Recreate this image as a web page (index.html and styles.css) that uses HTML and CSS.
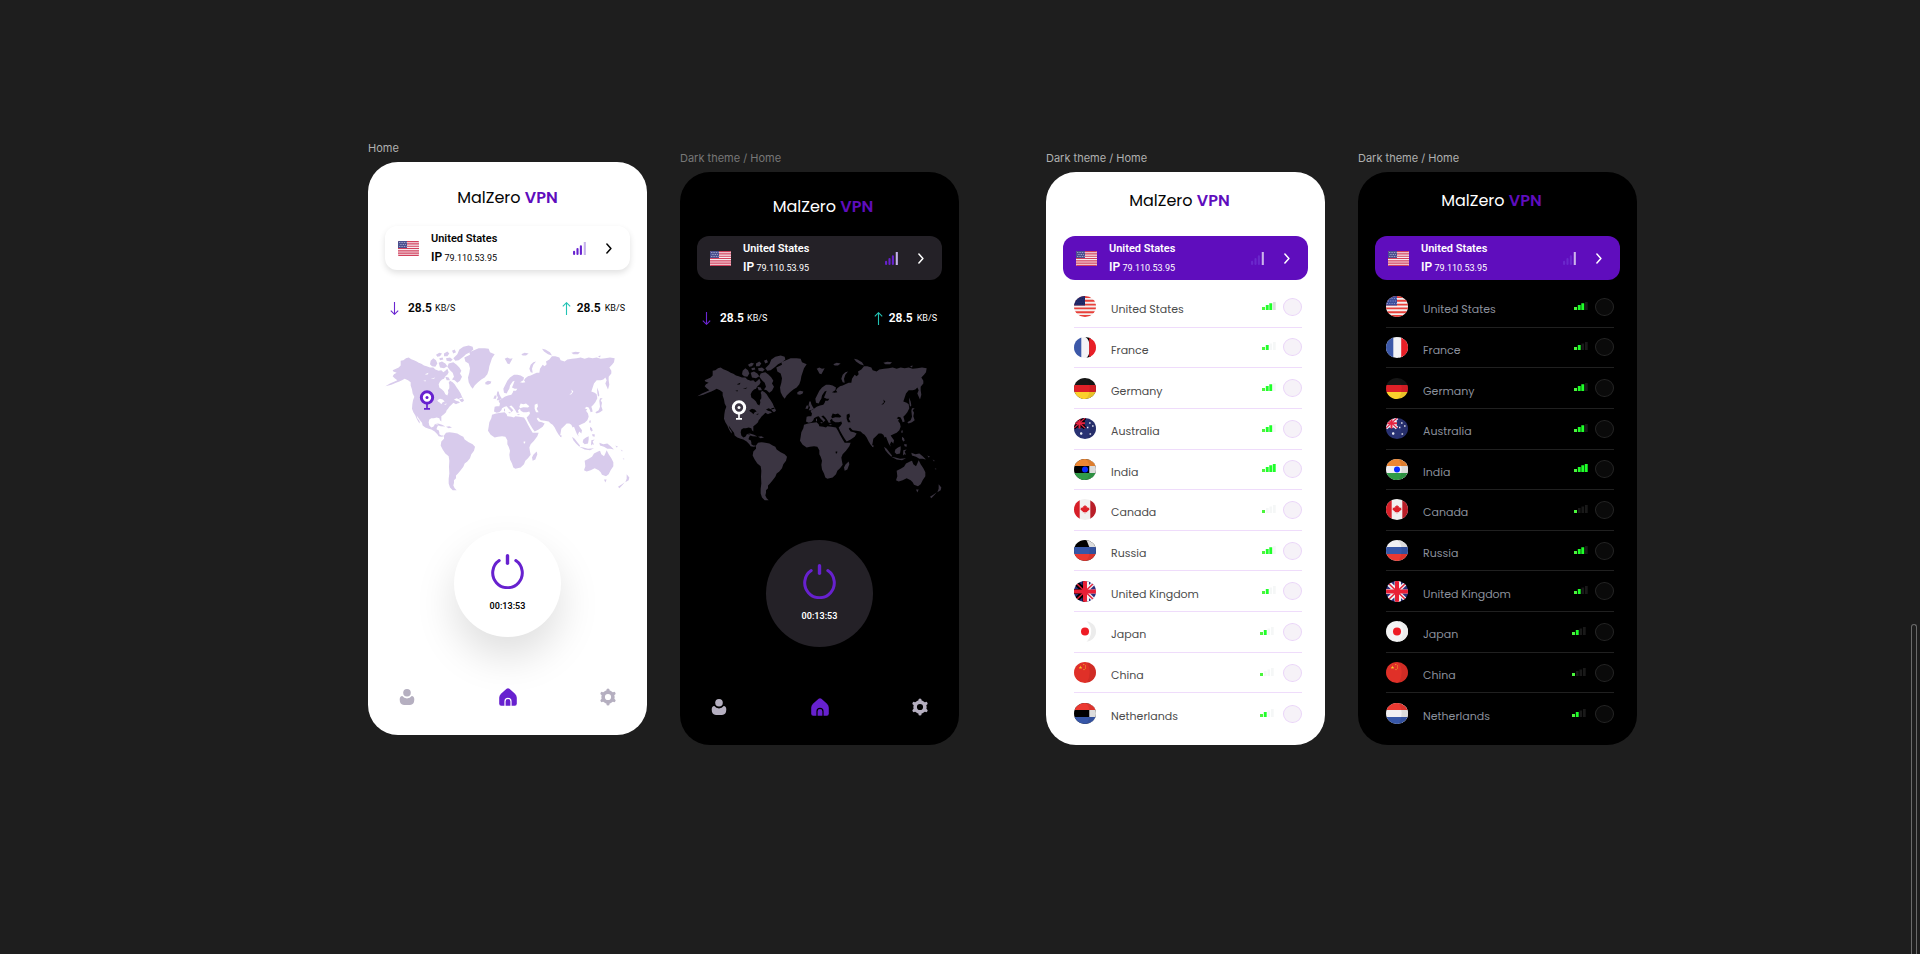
FILE: index.html
```html
<!DOCTYPE html>
<html lang="en">
<head>
<meta charset="utf-8">
<title>MalZero VPN</title>
<link rel="stylesheet" href="styles.css">
</head>
<body>
<svg class="defs" aria-hidden="true">
  <symbol id="us-rect" viewBox="0 0 21 15">
    <rect width="21" height="15" fill="#f6e9ee"/>
    <path d="M0 .6h21M0 2.9h21M0 5.2h21M0 7.5h21M0 9.8h21M0 12.1h21M0 14.4h21" stroke="#d2405c" stroke-width="1.15"/>
    <rect width="9" height="7" fill="#4a4f8f"/>
    <path d="M1 1.5h7.5M1.8 3.5h6.5M1 5.5h7.5" stroke="#c9cbe2" stroke-width=".8" stroke-dasharray=".8 .9"/>
  </symbol>
  <symbol id="bars" viewBox="0 0 13 13">
    <path d="M1.1 9.7v2.2M4.5 7v4.9M7.9 4.2v7.7" stroke="var(--bar)" stroke-width="2.1" stroke-linecap="round"/>
    <path d="M11.8 0v13" stroke="var(--bar-last)" stroke-width="2.1"/>
  </symbol>
  <symbol id="chevron" viewBox="0 0 6 11"><path d="M.9 1l4 4.5-4 4.5" fill="none" stroke="currentColor" stroke-width="1.5" stroke-linecap="round" stroke-linejoin="round"/></symbol>
  <symbol id="down" viewBox="0 0 9 13"><path d="M4.500 0v12M.8 8.600l3.700 3.700 3.700-3.700" fill="none" stroke="#6a25d0" stroke-width="1.1"/></symbol>
  <symbol id="up" viewBox="0 0 9 13"><path d="M4.500 13V1M.8 4.400L4.500.7l3.700 3.700" fill="none" stroke="#22c3b4" stroke-width="1.1"/></symbol>
  <symbol id="power" viewBox="0 0 33 35">
    <path d="M8.200 6.600a14.800 14.800 0 1 0 16.600 0" fill="none" stroke="#6721cf" stroke-width="3" stroke-linecap="round"/>
    <path d="M16.500 1.800v7.400" stroke="#6721cf" stroke-width="3.400" stroke-linecap="round"/>
  </symbol>
  <symbol id="user" viewBox="0 0 18 18">
    <circle cx="9" cy="4.700" r="3.800" fill="#b5afc0"/>
    <path d="M1.700 11.500Q1.700 8 4.300 8Q6 10.400 9 10.400Q12 10.400 13.700 8Q16.300 8 16.300 11.500Q16.300 16.900 12 16.900H6Q1.700 16.900 1.700 11.500Z" fill="#b5afc0"/>
  </symbol>
  <symbol id="house" viewBox="0 0 18 18">
    <path d="M7.600.8Q9-.3 10.400.8L16 5.700Q17.800 7.600 17.800 9.800V15.600Q17.800 17.800 15.800 17.800H2.200Q.2 17.800.2 15.600V9.800Q.2 7.600 2 5.700Z" fill="#6721cf"/>
    <path d="M6 18V13.400a3 3 0 0 1 6 0V18" fill="none" stroke="var(--surface)" stroke-width="1.200"/>
  </symbol>
  <symbol id="gear" viewBox="0 0 18 18">
    <g fill="none" stroke="#b5afc0">
      <circle cx="9" cy="9" r="4.900" stroke-width="3.600"/>
      <path d="M9 3.500V2M9 14.500V16M13.700 6.300l1.300-.8M4.300 11.700l-1.300.8M13.700 11.700l1.300.8M4.300 6.300L3 5.500" stroke-width="3.200" stroke-linecap="round"/>
    </g>
  </symbol>

  <symbol id="world" viewBox="45 42 735 440">
    <path fill="var(--land)" fill-rule="evenodd" d="M92 92L100 90 108 84 116 82 124 87 132 90 140 94 146 98 154 101 162 106 170 108 180 112 190 112 196 118 206 122 214 120 220 126 226 122 232 116 236 126 232 134 226 138 222 146 216 148 210 154 206 162 208 172 216 178 222 184 226 192 232 196 235 188 234 180 238 174 238 164 236 158 240 152 248 156 254 162 260 172 266 180 272 190 276 200 278 206 268 208 260 204 252 208 258 212 266 214 270 218 262 220 258 222 250 218 246 222 242 226 238 230 234 236 230 240 228 246 222 252 214 258 214 266 214 274 210 270 208 264 200 262 192 264 184 264 178 268 176 276 178 286 184 292 190 290 194 284 202 282 204 286 200 294 200 298 206 300 208 306 208 312 214 316 220 316 222 318 214 320 206 318 202 312 194 304 184 298 176 296 166 292 158 286 156 278 150 270 144 262 140 256 142 264 148 272 150 280 146 276 140 266 136 256 130 246 126 236 127 222 129 210 133 200 128 190 126 178 122 166 122 156 114 150 104 146 96 150 88 154 78 158 64 164 46 168 60 160 74 154 82 150 74 144 68 138 72 132 80 128 70 124 68 120 78 116 86 112 92 106Z
    M202 210L210 206 218 208 224 214 218 216 214 222 210 218 204 214ZM222 222L230 220 228 224ZM160 152L168 150 166 154ZM164 132L176 128 172 134ZM182 146L196 142 192 146Z
    M283 82L300 74 298 66 312 60 326 54 344 54 356 56 360 66 374 72 366 84 362 96 358 108 356 120 352 132 344 142 334 148 324 156 314 166 308 176 302 168 296 156 294 142 298 128 300 114 296 100 286 94Z
    M250 84L262 72 268 58 280 50 296 46 308 50 310 58 300 66 288 72 280 80 266 90 256 92ZM182 92L190 84 198 90 202 100 196 110 186 108 180 102ZM206 98L216 94 226 100 232 108 222 114 210 112ZM198 74L208 68 216 70 210 78 202 80ZM222 70L232 64 238 70 232 78 222 78ZM228 84L240 82 248 88 242 94 230 92ZM208 84L218 82 220 88 210 90ZM246 62L254 58 258 66 250 70ZM236 100L250 96 260 104 268 112 274 122 270 130 276 140 270 152 262 158 254 150 246 148 252 140 248 128 240 120 232 110ZM226 140L236 142 240 150 230 150ZM268 204L278 202 282 212 276 216 270 212Z
    M346 156L354 152 364 154 362 160 354 164 346 162ZM192 282L204 280 216 284 226 289 212 288 200 284ZM228 290L238 288 246 292 236 294Z
    M222 316L228 308 238 306 250 308 262 310 272 316 280 320 284 328 296 336 308 342 315 350 312 362 304 372 300 384 292 394 284 400 280 410 272 420 264 430 258 436 258 444 252 450 252 458 250 466 254 474 260 480 248 480 240 472 236 460 236 446 238 430 237 410 238 392 236 378 226 370 218 358 212 346 214 334 222 326Z
    M366 254L378 250 392 248 404 246 410 252 412 258 424 260 432 262 436 258 448 260 462 262 468 272 474 284 482 298 488 308 496 308 506 308 502 318 492 332 482 342 478 352 480 364 482 374 474 384 466 392 462 402 452 412 436 416 430 412 426 400 420 388 418 374 420 362 416 350 412 342 412 330 406 320 396 318 384 320 374 322 362 314 354 302 356 290 358 276 364 264ZM461 334L466 334 465 340 461 339ZM500 364L502 372 496 388 488 392 486 382 490 374 496 368Z
    M374 230L372 244 380 248 388 246 394 240 396 234 404 230 410 228 416 236 422 242 424 246 430 240 424 234 418 228 424 226 430 232 436 240 440 248 446 248 444 240 450 236 452 242 460 246 470 246 478 244 480 250 476 256 470 262 474 272 482 286 488 296 494 304 506 298 518 290 524 280 516 276 506 274 500 266 504 262 512 270 524 272 536 274 542 280 548 284 554 292 560 304 566 314 570 318 572 308 574 296 582 288 590 280 598 280 604 284 608 292 612 290 616 300 620 310 626 320 624 312 628 304 634 310 636 300 630 292 626 286 634 282 644 278 652 270 656 260 654 250 648 242 652 238 644 234 650 230 656 232 660 240 662 246 668 244 666 236 664 230 670 224 676 216 682 204 680 192 674 188 664 184 668 172 672 160 680 150 692 150 700 148 706 142 710 150 706 160 714 178 718 164 716 150 716 140 724 130 724 122 718 112 726 104 732 96 734 84 720 82 706 84 692 86 680 82 668 84 656 82 644 86 632 82 620 84 606 86 592 88 584 94 572 90 568 82 556 78 546 78 538 88 528 94 530 102 524 108 518 104 510 116 508 128 500 128 490 132 482 136 474 138 466 144 462 150 466 156 458 158 450 156 460 150 462 142 452 136 442 134 432 134 420 142 412 152 406 164 400 176 402 188 410 190 414 182 418 176 420 166 428 154 434 152 430 162 426 172 434 176 442 176 438 182 430 182 428 188 424 194 414 196 404 200 398 204 390 208 386 214 390 220 388 228 380 228Z
    M448 230L452 220 460 222 468 220 478 228 474 232 460 231 450 234ZM494 224L502 220 504 228 500 236 506 246 498 246 494 236ZM604 178L610 184 604 192 598 194 606 186Z
    M382 184L386 184 388 192 392 200 396 206 388 210 380 210 384 202 380 194ZM374 196L380 196 378 206 370 206ZM498 94L490 96 482 104 478 116 482 126 488 128 486 116 490 104ZM404 86L412 82 420 86 428 84 424 92 418 102 412 100 408 92ZM454 72L464 68 476 70 468 76 458 76ZM516 56L526 58 540 66 546 76 534 72 522 64ZM604 68L616 65 630 66 624 72 610 72ZM684 78L692 76 690 82ZM414 246L422 246 420 250ZM402 236L405 236 405 243 402 243ZM440 252L450 252 446 255Z
    M698 204L692 210 696 218 694 228 698 240 690 246 680 250 676 246 686 240 690 230 688 212 690 204ZM681 172L686 184 688 196 684 200 682 188ZM658 272L662 270 662 278 658 278ZM660 290L666 294 668 302 664 304 660 298ZM666 312L674 312 674 320 668 318ZM570 314L575 316 574 321 570 320Z
    M606 320L614 326 622 336 630 346 628 350 618 340 610 330ZM628 350L640 352 654 356 672 354 660 360 644 358ZM640 328L648 322 656 318 656 328 654 340 644 342 638 336ZM664 330L674 328 668 334 672 344 667 342 663 346ZM688 338L700 342 712 340 722 348 732 358 722 356 712 356 702 350 690 346ZM736 346L744 350 740 352ZM752 358L758 362 756 364ZM758 384L763 386 762 389Z
    M644 392L656 386 666 380 672 370 684 364 690 362 694 372 702 378 706 370 710 360 716 372 724 384 730 396 730 408 722 420 716 432 708 438 696 434 692 426 686 420 674 414 662 420 650 424 642 420 646 408ZM702 448L710 448 706 457ZM770 432L778 442 776 450 766 456 770 446ZM764 456L758 464 748 474 744 470 756 462Z"/>
    <circle cx="171" cy="202" r="17" fill="var(--pin-core)" stroke="var(--pin)" stroke-width="9"/>
    <circle cx="171" cy="202" r="4.500" fill="var(--pin)"/>
    <path d="M171 220v16M162 236h18" fill="none" stroke="var(--pin)" stroke-width="5"/>
  </symbol>

  <symbol id="sig1" viewBox="0 0 14 8"><path d="M4 3h2.600v5H4zM7.500 1.500h2.600V8H7.500zM11 0h2.700v8H11z" fill="var(--off)"/><path d="M0 5h3v3H0z" fill="#4af53c"/></symbol>
  <symbol id="sig2" viewBox="0 0 14 8"><path d="M7.500 1.500h2.600V8H7.500zM11 0h2.700v8H11z" fill="var(--off)"/><path d="M0 5h3v3H0z" fill="#4af53c"/><path d="M3.800 3h2.900v5H3.800z" fill="#1fff2a"/></symbol>
  <symbol id="sig3" viewBox="0 0 14 8"><path d="M11 0h2.700v8H11z" fill="var(--off)"/><path d="M0 5h3v3H0z" fill="#4af53c"/><path d="M3.800 3h2.900v5H3.800zM7.300 1.200h2.900V8H7.300z" fill="#1fff2a"/></symbol>
  <symbol id="sig4" viewBox="0 0 14 8"><path d="M0 5h3v3H0z" fill="#4af53c"/><path d="M3.800 3h2.900v5H3.800zM7.300 1.200h2.900V8H7.300zM10.800 0h2.900v8h-2.900z" fill="#1fff2a"/></symbol>

  <symbol id="shade" viewBox="0 0 22 21"><path d="M12.500 0Q19 10 12.500 21H22V0Z" fill="#000" opacity=".07"/></symbol>
  <symbol id="f-us" viewBox="0 0 22 21">
    <rect width="22" height="21" fill="#f5efee"/>
    <path d="M0 1h22M0 4.800h22M0 8.600h22M0 12.400h22M0 16.200h22M0 20h22" stroke="#e8403a" stroke-width="1.900"/>
    <path d="M0 0h11v9.500H0z" fill="var(--canton)"/>
    <path d="M1 2.500h10M2 5h9M1 7.500h10" stroke="var(--stars)" stroke-width="1" stroke-dasharray="1 1.300"/>
  </symbol>
  <symbol id="f-fr" viewBox="0 0 22 21"><rect width="22" height="21" fill="#f3f3f6"/><path d="M0 0h7.300v21H0z" fill="#3c58a8"/><path d="M11.500 0Q16 3 15.500 10.500Q16 18 12.500 21H17V0Z" fill="var(--white)"/><path d="M15.200 0H22v21h-6.800Z" fill="#e81f27"/></symbol>
  <symbol id="f-de" viewBox="0 0 22 21"><rect width="22" height="21" fill="#161616"/><path d="M0 7h22v7H0z" fill="#df2027"/><path d="M0 14h22v7H0z" fill="#fbd02c"/><use href="#shade"/></symbol>
  <symbol id="f-au" viewBox="0 0 22 21">
    <rect width="22" height="21" fill="#293273"/>
    <path d="M0 0L11 10M11 0L0 10M5.500 0v10M0 5h11" stroke="var(--white)" stroke-width="3.600"/>
    <path d="M0 0L11 10M11 0L0 10" stroke="#e0264a" stroke-width="1.200"/><path d="M5.500 0v10.500M0 5.200h11" stroke="#e62240" stroke-width="2"/>
    <path d="M6 15.500h2.400M7.200 14.300v2.400M15 5h1.600M13 9.500h1.400M18 8h1.600M15.500 16h1.600" stroke="#e8eaf4" stroke-width="1.500"/><use href="#shade"/>
  </symbol>
  <symbol id="f-in" viewBox="0 0 22 21"><rect width="22" height="21" fill="var(--white)"/><path d="M15.300 0H22v21h-6.700z" fill="#ededed"/><path d="M0 0h22v7H0z" fill="#ee8732"/><path d="M0 14h22v7H0z" fill="#319b48"/><circle cx="11" cy="10.500" r="3" fill="#0a2bff"/><use href="#shade"/></symbol>
  <symbol id="f-ca" viewBox="0 0 22 21"><rect width="22" height="21" fill="#f1f0f0"/><path d="M0 0h5.700v21H0z" fill="#d71f28"/><path d="M16.300 0H22v21h-5.700z" fill="#b91e28"/><path d="M11 5.800l1 1.700 1.100-.6-.3 2.200 1.200-1 .4.800 1.200-.2-.6 1.400.7.500-2.600 1.900.2.700-2-.2V14.600h-.6V13l-2 .2.200-.7-2.600-1.900.7-.5-.6-1.400 1.200.2.400-.8 1.200 1-.3-2.200 1.100.6z" fill="#dd2029"/></symbol>
  <symbol id="f-ru" viewBox="0 0 22 21"><rect width="22" height="21" fill="var(--white)"/><path d="M12.500 0L15.300 7H22V0Z" fill="#ededed"/><path d="M0 7h22v7H0z" fill="#3757a8"/><path d="M0 14h22v7H0z" fill="#ec3931"/><use href="#shade"/></symbol>
  <symbol id="f-uk" viewBox="0 0 22 21">
    <rect width="22" height="21" fill="#2b2f7c"/>
    <path d="M0 0L11 10.500 0 21M11 0v21M0 10.500h11" fill="none" stroke="var(--white)" stroke-width="5"/>
    <path d="M22 0L11 10.500 22 21M11 10.500h11M13 0v21" fill="none" stroke="#f4f1f4" stroke-width="4"/>
    <path d="M2 2L20 19M20 2L2 19" stroke="#e5203a" stroke-width="1.500"/><path d="M11 0v21M0 10.500h22" stroke="#e81f36" stroke-width="4"/>
  </symbol>
  <symbol id="f-jp" viewBox="0 0 22 21"><rect width="22" height="21" fill="var(--paper)"/><path d="M12.500 0Q22 10 12.500 21H22V0Z" fill="#ececec"/><circle cx="11" cy="10.500" r="4" fill="#ee1c25"/></symbol>
  <symbol id="f-cn" viewBox="0 0 22 21"><rect width="22" height="21" fill="#e03028"/><path d="M6.500 3.600l.5 1.300h1.300l-1 .9.300 1.300-1.100-.8-1.100.8.300-1.300-1-.9h1.300z" fill="#fbc52b"/><path d="M9.300 2.600h1M11 4h.9M11 6h.9M9.500 7.600h1" stroke="#fbc52b" stroke-width=".9"/><use href="#shade"/></symbol>
  <symbol id="f-nl" viewBox="0 0 22 21"><rect width="22" height="21" fill="var(--white)"/><path d="M15.300 0H22v21h-6.700z" fill="#ededed"/><path d="M0 0h22v7H0z" fill="#ec3931"/><path d="M0 14h22v7H0z" fill="#3757a8"/><use href="#shade"/></symbol>
</svg>

<main class="canvas">
  <section class="board">
    <h2 class="board-label">Home</h2>
    <div class="phone light home">
      <h1 class="brand">MalZero <b>VPN</b></h1>
      <button class="server" type="button">
        <svg class="server-flag"><use href="#us-rect"/></svg>
        <span class="server-text"><b class="server-name">United States</b><span class="server-ip"><b>IP</b> 79.110.53.95</span></span>
        <svg class="bars"><use href="#bars"/></svg><svg class="chevron"><use href="#chevron"/></svg>
      </button>
      <div class="speeds">
        <p class="speed"><svg class="arrow"><use href="#down"/></svg><b>28.5</b><span>KB/S</span></p>
        <p class="speed up"><svg class="arrow"><use href="#up"/></svg><b>28.5</b><span>KB/S</span></p>
      </div>
      <svg class="map" viewBox="0 0 245 147" role="img" aria-label="World map"><use href="#world"/></svg>
      <button class="power" type="button"><svg class="power-icon"><use href="#power"/></svg><span>00:13:53</span></button>
      <nav class="tabs">
        <a href="#" aria-label="Profile"><svg><use href="#user"/></svg></a>
        <a href="#" aria-label="Home"><svg><use href="#house"/></svg></a>
        <a href="#" aria-label="Settings"><svg><use href="#gear"/></svg></a>
      </nav>
    </div>
  </section>

  <section class="board lower">
    <h2 class="board-label dim">Dark theme / Home</h2>
    <div class="phone dark home">
      <h1 class="brand">MalZero <b>VPN</b></h1>
      <button class="server" type="button">
        <svg class="server-flag"><use href="#us-rect"/></svg>
        <span class="server-text"><b class="server-name">United States</b><span class="server-ip"><b>IP</b> 79.110.53.95</span></span>
        <svg class="bars"><use href="#bars"/></svg><svg class="chevron"><use href="#chevron"/></svg>
      </button>
      <div class="speeds">
        <p class="speed"><svg class="arrow"><use href="#down"/></svg><b>28.5</b><span>KB/S</span></p>
        <p class="speed up"><svg class="arrow"><use href="#up"/></svg><b>28.5</b><span>KB/S</span></p>
      </div>
      <svg class="map" viewBox="0 0 245 147" role="img" aria-label="World map"><use href="#world"/></svg>
      <button class="power" type="button"><svg class="power-icon"><use href="#power"/></svg><span>00:13:53</span></button>
      <nav class="tabs">
        <a href="#" aria-label="Profile"><svg><use href="#user"/></svg></a>
        <a href="#" aria-label="Home"><svg><use href="#house"/></svg></a>
        <a href="#" aria-label="Settings"><svg><use href="#gear"/></svg></a>
      </nav>
    </div>
  </section>

  <section class="board lower second-pair">
    <h2 class="board-label">Dark theme / Home</h2>
    <div class="phone light picker">
      <h1 class="brand">MalZero <b>VPN</b></h1>
      <button class="server" type="button">
        <svg class="server-flag"><use href="#us-rect"/></svg>
        <span class="server-text"><b class="server-name">United States</b><span class="server-ip"><b>IP</b> 79.110.53.95</span></span>
        <svg class="bars"><use href="#bars"/></svg><svg class="chevron"><use href="#chevron"/></svg>
      </button>
      <div class="countries" role="radiogroup" aria-label="Server country">
        <label class="row"><svg class="flag"><use href="#f-us"/></svg><span class="name">United States</span><svg class="signal strong"><use href="#sig3"/></svg><input type="radio" name="light"></label>
        <label class="row"><svg class="flag"><use href="#f-fr"/></svg><span class="name">France</span><svg class="signal"><use href="#sig2"/></svg><input type="radio" name="light"></label>
        <label class="row"><svg class="flag"><use href="#f-de"/></svg><span class="name">Germany</span><svg class="signal"><use href="#sig3"/></svg><input type="radio" name="light"></label>
        <label class="row"><svg class="flag"><use href="#f-au"/></svg><span class="name">Australia</span><svg class="signal"><use href="#sig3"/></svg><input type="radio" name="light"></label>
        <label class="row"><svg class="flag"><use href="#f-in"/></svg><span class="name">India</span><svg class="signal"><use href="#sig4"/></svg><input type="radio" name="light"></label>
        <label class="row"><svg class="flag"><use href="#f-ca"/></svg><span class="name">Canada</span><svg class="signal"><use href="#sig1"/></svg><input type="radio" name="light"></label>
        <label class="row"><svg class="flag"><use href="#f-ru"/></svg><span class="name">Russia</span><svg class="signal"><use href="#sig3"/></svg><input type="radio" name="light"></label>
        <label class="row"><svg class="flag"><use href="#f-uk"/></svg><span class="name">United Kingdom</span><svg class="signal"><use href="#sig2"/></svg><input type="radio" name="light"></label>
        <label class="row far"><svg class="flag"><use href="#f-jp"/></svg><span class="name">Japan</span><svg class="signal"><use href="#sig2"/></svg><input type="radio" name="light"></label>
        <label class="row far"><svg class="flag"><use href="#f-cn"/></svg><span class="name">China</span><svg class="signal"><use href="#sig1"/></svg><input type="radio" name="light"></label>
        <label class="row far"><svg class="flag"><use href="#f-nl"/></svg><span class="name">Netherlands</span><svg class="signal"><use href="#sig2"/></svg><input type="radio" name="light"></label>
      </div>
    </div>
  </section>

  <section class="board lower">
    <h2 class="board-label">Dark theme / Home</h2>
    <div class="phone dark picker">
      <h1 class="brand">MalZero <b>VPN</b></h1>
      <button class="server" type="button">
        <svg class="server-flag"><use href="#us-rect"/></svg>
        <span class="server-text"><b class="server-name">United States</b><span class="server-ip"><b>IP</b> 79.110.53.95</span></span>
        <svg class="bars"><use href="#bars"/></svg><svg class="chevron"><use href="#chevron"/></svg>
      </button>
      <div class="countries" role="radiogroup" aria-label="Server country">
        <label class="row"><svg class="flag"><use href="#f-us"/></svg><span class="name">United States</span><svg class="signal"><use href="#sig3"/></svg><input type="radio" name="dark"></label>
        <label class="row"><svg class="flag"><use href="#f-fr"/></svg><span class="name">France</span><svg class="signal"><use href="#sig2"/></svg><input type="radio" name="dark"></label>
        <label class="row"><svg class="flag"><use href="#f-de"/></svg><span class="name">Germany</span><svg class="signal"><use href="#sig3"/></svg><input type="radio" name="dark"></label>
        <label class="row"><svg class="flag"><use href="#f-au"/></svg><span class="name">Australia</span><svg class="signal"><use href="#sig3"/></svg><input type="radio" name="dark"></label>
        <label class="row"><svg class="flag"><use href="#f-in"/></svg><span class="name">India</span><svg class="signal"><use href="#sig4"/></svg><input type="radio" name="dark"></label>
        <label class="row"><svg class="flag"><use href="#f-ca"/></svg><span class="name">Canada</span><svg class="signal"><use href="#sig1"/></svg><input type="radio" name="dark"></label>
        <label class="row"><svg class="flag"><use href="#f-ru"/></svg><span class="name">Russia</span><svg class="signal"><use href="#sig3"/></svg><input type="radio" name="dark"></label>
        <label class="row"><svg class="flag"><use href="#f-uk"/></svg><span class="name">United Kingdom</span><svg class="signal"><use href="#sig2"/></svg><input type="radio" name="dark"></label>
        <label class="row far"><svg class="flag"><use href="#f-jp"/></svg><span class="name">Japan</span><svg class="signal"><use href="#sig2"/></svg><input type="radio" name="dark"></label>
        <label class="row far"><svg class="flag"><use href="#f-cn"/></svg><span class="name">China</span><svg class="signal"><use href="#sig1"/></svg><input type="radio" name="dark"></label>
        <label class="row far"><svg class="flag"><use href="#f-nl"/></svg><span class="name">Netherlands</span><svg class="signal"><use href="#sig2"/></svg><input type="radio" name="dark"></label>
      </div>
    </div>
  </section>
</main>
<div class="scroll-thumb" aria-hidden="true"></div>
</body>
</html>
```
FILE: styles.css
```css
* { box-sizing: border-box; }

body {
  margin: 0;
  min-height: 100vh;
  background: #1e1e1e;
  font-family: Roboto, "Liberation Sans", sans-serif;
  overflow: hidden;
}

h1, h2, p { margin: 0; font-weight: 400; }
svg { display: block; flex: none; }
button { border: 0; padding: 0; font: inherit; color: inherit; cursor: pointer; }

.defs { position: absolute; width: 0; height: 0; }

.canvas {
  display: flex;
  align-items: flex-start;
  gap: 33px;
  padding: 141px 0 0 368px;
}

.board { flex: none; width: 279px; }
.lower { margin-top: 10px; }
.second-pair { margin-left: 54px; }

.board-label {
  margin-bottom: 7px;
  font: 400 11px/14px Inter, sans-serif;
  color: #b0b0b0;
}
.dim { color: #777; }

.phone {
  display: flex;
  flex-direction: column;
  min-height: 573px;
  padding: 0 17px;
  border-radius: 30px;
  background: var(--surface);
  color: var(--ink);
}

.light {
  --surface: #fff;
  --ink: #050505;
  --muted: #4c4c4c;
  --panel: #fff;
  --panel-shadow: 0 3px 6px rgba(0, 0, 0, .12);
  --round-shadow: 0 20px 40px rgba(0, 0, 0, .13);
  --land: #d8cbec;
  --pin: #6721cf;
  --pin-core: #fff;
  --bar: #6721cf;
  --bar-last: #c5b1ea;
  --off: #f5f7f7;
  --line: #efdcfb;
  --radio: #f6f2f8;
  --radio-line: #ead5f8;
  --white: #000;
  --paper: #fff;
  --canton: #232a6b;
  --stars: #1b2058;
}

.dark {
  --surface: #000;
  --ink: #fff;
  --muted: #8b909c;
  --panel: #242127;
  --panel-shadow: none;
  --round-shadow: none;
  --land: #3b3542;
  --pin: #fff;
  --pin-core: #3b3542;
  --bar: #6721cf;
  --bar-last: #c5b1ea;
  --off: #191919;
  --line: #202020;
  --radio: #0a0a0a;
  --radio-line: #252525;
  --white: #f1f0f3;
  --paper: #f4f4f4;
  --canton: #3b4c9b;
  --stars: #8c96cc;
}

.brand {
  height: 64px;
  padding-top: 24px;
  text-align: center;
  font: 400 16px/24px Poppins, Inter, sans-serif;
}
.brand b { font-weight: 600; color: #5f0dbd; }
.dark.home .brand { padding-top: 23px; padding-left: 7px; }
.picker .brand { padding-top: 17px; padding-right: 12px; }

.server {
  display: flex;
  align-items: center;
  height: 44px;
  padding: 0 18px 0 13px;
  border-radius: 12px;
  background: var(--panel);
  box-shadow: var(--panel-shadow);
  text-align: left;
}
.picker .server {
  --bar: #6b28cc;
  --bar-last: #cbb4ea;
  background: #5f0dbd;
  color: #fff;
  box-shadow: none;
}
.server-flag { width: 21px; height: 15px; border-radius: 1px; }
.server-text {
  flex: 1;
  display: flex;
  flex-direction: column;
  margin-left: 12px;
  line-height: 18px;
}
.server-name { font-size: 11px; font-weight: 600; }
.server-ip { font-size: 9px; }
.server-ip b { font-size: 12px; font-weight: 600; }
.bars { width: 13px; height: 13px; }
.chevron { width: 6px; height: 11px; margin-left: 20px; }

.speeds {
  display: flex;
  justify-content: space-between;
  margin-top: 28px;
  padding: 0 5px;
}
.speed { display: flex; align-items: center; line-height: 20px; font-size: 9px; }
.speed b { margin: 0 3px 0 9px; font-size: 12px; font-weight: 600; }
.up b { margin: 0 4px 0 6px; }
.arrow { width: 9px; height: 13px; }

.map { width: 100%; height: auto; margin-top: 26px; }

.power {
  align-self: center;
  width: 107px;
  height: 107px;
  margin-top: 39px;
  border-radius: 50%;
  background: var(--panel);
  box-shadow: var(--round-shadow);
  font-size: 9px;
  font-weight: 600;
  line-height: 14px;
}
.power-icon { width: 33px; height: 35px; margin: 0 auto 10px; }

.tabs {
  display: flex;
  justify-content: space-between;
  margin-top: auto;
  padding: 0 13px 29px;
}
.tabs svg { width: 18px; height: 18px; }

.countries {
  flex: 1;
  display: grid;
  grid-template-rows: repeat(11, 1fr);
  margin: 7px 6px 11px 11px;
}
.row {
  display: flex;
  align-items: center;
  border-bottom: 1px solid var(--line);
}
.row:last-child { border-bottom: 0; }
.flag { width: 22px; height: 21px; border-radius: 50%; overflow: hidden; }
.name {
  flex: 1;
  padding: 5px 0 0 15px;
  font: 400 11px/18px Poppins, Inter, sans-serif;
  color: var(--muted);
}
.signal { width: 14px; height: 8px; margin-bottom: 2px; }
.light .strong { --off: #dedede; }
.row input {
  appearance: none;
  width: 19px;
  height: 18px;
  margin: 0 0 0 7px;
  border: 1px solid var(--radio-line);
  border-radius: 50%;
  background: var(--radio);
}
.far input { margin-left: 9px; }
.row input:checked { background: #5f0dbd; }

.scroll-thumb {
  position: absolute;
  top: 624px;
  right: 3px;
  bottom: 0;
  width: 6px;
  border: 1px solid #6b6b6b;
  border-bottom: 0;
  border-radius: 3px 3px 0 0;
}
```
